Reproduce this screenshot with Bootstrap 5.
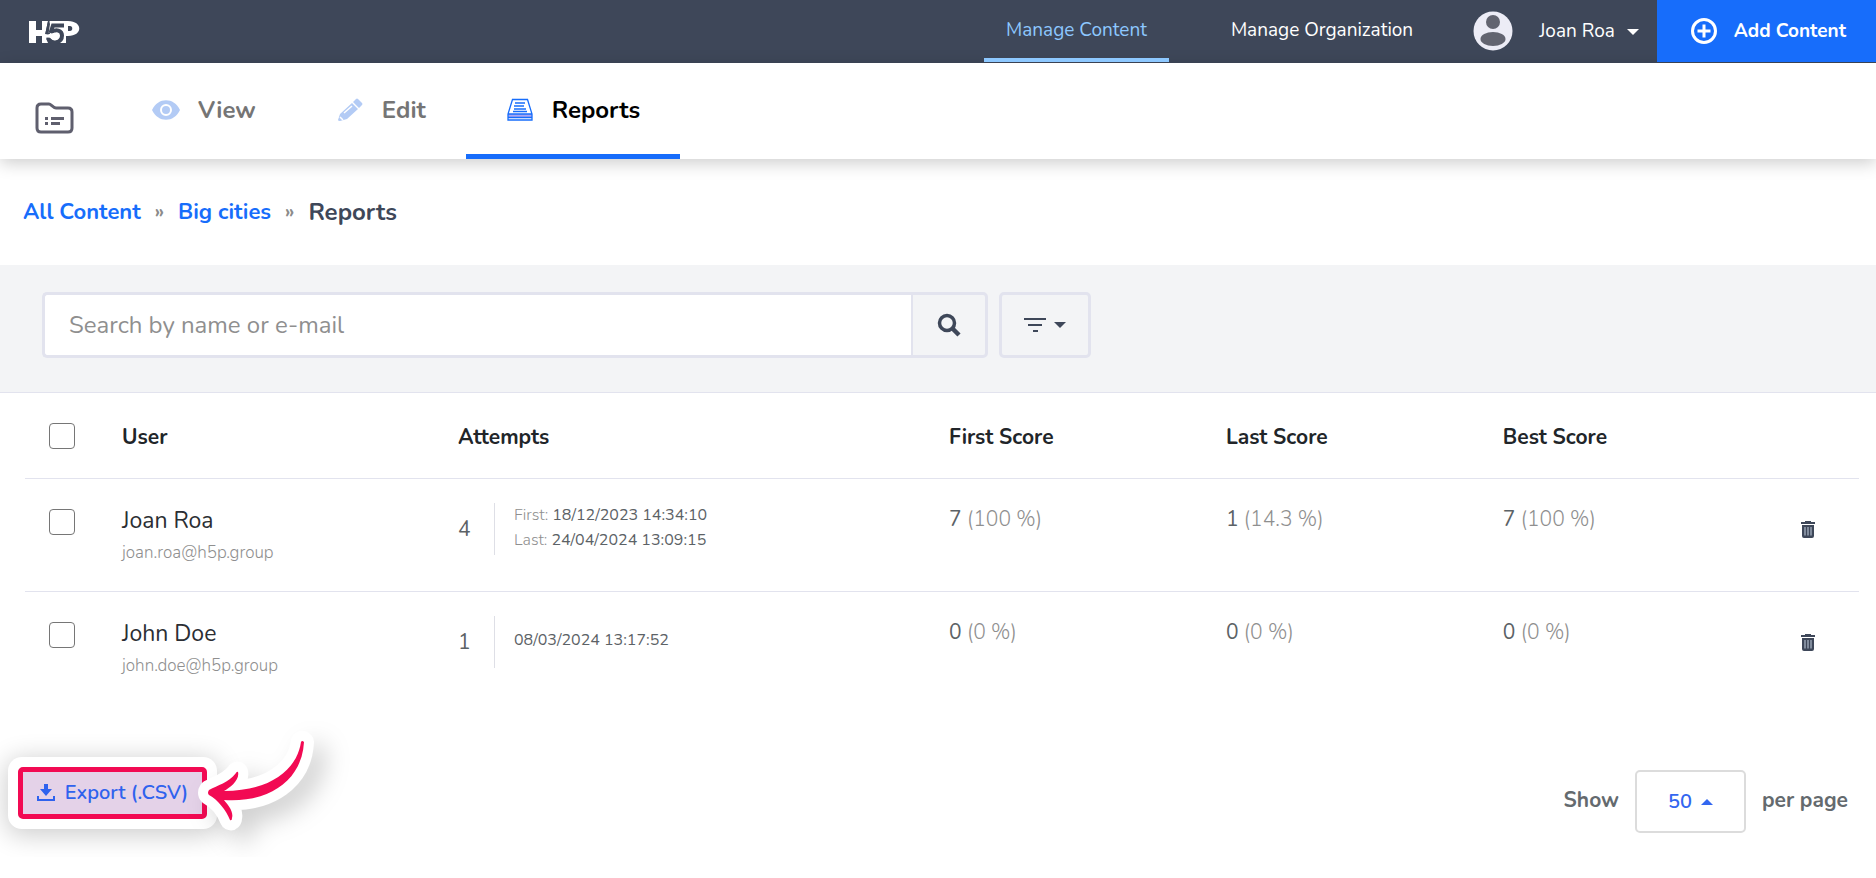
<!DOCTYPE html>
<html lang="en">
<head>
<meta charset="utf-8">
<meta name="viewport" content="width=device-width, initial-scale=1">
<title>Reports – Big cities</title>
<link rel="stylesheet" href="https://cdn.jsdelivr.net/npm/bootstrap@5.3.0/dist/css/bootstrap.min.css">
<script src="https://cdn.jsdelivr.net/npm/bootstrap@5.3.0/dist/js/bootstrap.bundle.min.js"></script>
<style>
body{font-family:Nunito,Lato,"Open Sans",sans-serif;font-size:21px;line-height:24px;color:#202124;background:#fff}
a{text-decoration:none}
svg{display:block;flex:none}
.topbar{background:#3e4759;min-height:63px;font-size:19px}
.brandmark{padding:20px 0 0 28px}
.topnav{gap:40px}
.navtab{height:62px;padding:2px 22px 0;color:#fff;border-bottom:4px solid transparent}
.navtab.active{color:#8dc8ff;border-color:#8dc8ff}
.usermenu{background:none;border:0;color:#fff;padding:0 18px 0 38px;height:62px}
.usermenu svg{margin-right:26px}
.usermenu .tri{margin:2px 0 0 12px}
.addbtn{background:#176dfb;color:#fff;border:0;height:62px;font-weight:700;padding:0 30px 0 33px;gap:16px}
.tri{border:6px solid transparent;border-bottom-width:0;border-top-color:currentColor}
.tri-up{border:6px solid transparent;border-top-width:0;border-bottom-color:currentColor}
.subbar{min-height:96px;box-shadow:0 4px 16px rgba(0,0,0,.2)}
.foldlink{padding:38px 37px 0 35px}
.tool{height:96px;padding:2px 40px 0;gap:18px;font-size:24px;font-weight:700;color:#757575;border-bottom:5px solid transparent}
.tool.active{color:#000;border-color:#176dfb}
.crumbs{padding:0 23px;height:106px;font-size:22px;font-weight:700;gap:14px}
.crumbs a{color:#176dfb}
.crumbs span{color:#8b8b8b;font-size:19px}
.crumbs strong{color:#3e4759;font-size:24px;font-weight:700}
.filterbar{background:#f3f4f6;border-bottom:1px solid #e2e3ee;padding:27px 42px 34px;gap:11px}
.searchbox{width:946px}
.searchbox .form-control,.boxbtn{height:66px;border:3px solid #e2e3ee;border-radius:5px;font-size:24px}
.searchbox .form-control{padding:0 24px;border-right:0}
.searchbox .form-control::placeholder{color:#8f8f8f}
.boxbtn{background:#f3f4f6;color:#3e4759;gap:8px}
.searchbox .findbtn{width:78px}
.filterbtn{width:92px}
.results{padding:0 17px 0 25px}
.report{table-layout:fixed}
.report>:not(caption)>*>*{padding:24px 0;border-bottom:1px solid #e2e3ee;vertical-align:top}
.report tbody tr:last-child td{border-bottom:0}
.report .c-check{width:97px}.report .c-user{width:336px}.report .c-tries{width:491px}.report .c-score{width:15.1%}
.report th{font-weight:700;height:85px}
.report th span{display:block;padding-top:8px}
.report td{height:113px;color:#8f8f8f}
.report .form-check-input{width:26px;height:26px;margin:6px 0 0 24px;border:1px solid #767676;border-radius:4px;display:block}
.report b{font-weight:400;color:#5c6266}
.scoreline{font-size:21px;line-height:32px;font-weight:300}
.person{font-size:23px;color:#2b2e33;line-height:36px;font-weight:400}
.mailline{font-size:17px;line-height:28px;font-weight:300}
.tries{width:37px;height:52px;border-right:1px solid #dedfe6;color:#5c6266;line-height:52px}
.dates{font-size:16px;line-height:25px;padding:0 0 2px 19px;font-weight:300}
.delbtn{background:none;border:0;color:#3e4759;padding:18px 0 0;margin-left:20px}
.bottombar{padding:63px 28px 24px 18px}
.exportwrap{position:relative}
.exportbtn{height:52px;width:189px;border:5px solid #f20a53;border-radius:5px;background:#e4d2e8;color:#2f62ee;font-size:20px;font-weight:600;gap:10px;padding:0;box-shadow:0 0 0 10px #fff,0 4px 26px 12px rgba(0,0,0,.2)}
.pointer{position:absolute;left:172px;top:-57px;pointer-events:none;overflow:visible;filter:drop-shadow(12px 12px 12px rgba(0,0,0,.18))}
.perpage{color:#646a6e;font-weight:700;gap:16px;margin-top:3px}
.perpage label{padding-bottom:4px}
.pagebtn{width:111px;height:63px;border:2px solid #dcdcdc;border-radius:5px;background:#fff;color:#3367f0;font-size:20px;font-weight:600;gap:9px}
</style>
</head>
<body>
<header class="topbar d-flex align-items-start">
  <a href="#" class="brandmark" aria-label="H5P"><svg width="53" height="24" viewBox="0 0 53 24"><path fill="#fff" d="M1 1h7v9h6V1h6l-3 14 3 8h-6v-7H8v7H1zM21 1h19c15 0 15 15 0 15h-2v7h-9l-9-6 2-13z"/><path fill="#3e4759" d="M40 6h2c3 0 3 5 0 5h-2z"/><path fill="none" stroke="#3e4759" stroke-width="4" d="M36 5.500H25L22.500 13M23 12.500c5-4 11-2 11 3 0 7-10 10-14 3"/><path fill="none" stroke="#3e4759" stroke-width="1.500" d="M21 0l-3 14 4-1"/><path fill="#fff" d="m17 14 6 1c2-4 7-2 7 1s-5 4-7 1l-6 1z"/></svg></a>
  <nav class="topnav ms-auto d-flex">
    <a class="navtab active d-flex align-items-center" href="#">Manage Content</a>
    <a class="navtab d-flex align-items-center" href="#">Manage Organization</a>
  </nav>
  <button class="usermenu d-flex align-items-center" type="button"><svg width="40" height="40" viewBox="0 0 40 40"><circle cx="20" cy="20" r="19.500" fill="#ececf6"/><circle cx="20" cy="11" r="7" fill="#626470"/><ellipse cx="20" cy="28" rx="12.500" ry="7" fill="#626470"/></svg>Joan Roa<span class="tri"></span></button>
  <button class="addbtn d-flex align-items-center" type="button"><svg width="28" height="28" viewBox="0 0 28 28" fill="none" stroke="#fff" stroke-width="3"><circle cx="14" cy="14" r="11.500"/><path d="M14 7.500v13M7.500 14h13"/></svg>Add Content</button>
</header>
<div class="subbar d-flex">
  <a href="#" class="foldlink" aria-label="Content folder"><svg width="40" height="34" viewBox="0 0 40 34"><path d="M6 3h8c2 0 4 4 7 4h12q4 0 4 4v16q0 4-4 4H6q-4 0-4-4V7q0-4 4-4z" fill="none" stroke="#5f5f6e" stroke-width="3"/><path d="M10 16h3v3h-3zM16 16h13v3H16zM10 21h3v3h-3zM16 21h9v3h-9z" fill="#5f5f6e"/></svg></a>
  <nav class="d-flex">
    <a class="tool d-flex align-items-center" href="#"><svg width="28" height="22" viewBox="0 0 28 22"><path d="M0 11C6-2 22-2 28 11 22 24 6 24 0 11z" fill="#b3cbf5"/><circle cx="14" cy="11" r="5" fill="#b3cbf5" stroke="#fff" stroke-width="2"/></svg>View</a>
    <a class="tool d-flex align-items-center" href="#"><svg width="28" height="26" viewBox="0 0 28 26"><path d="M4 17 16 6l6 6L11 22l-7 2q-2 0-2-1zM17 5l3-3q1-1 2 0l4 4q1 1 0 2l-3 3z" fill="#b3cbf5"/><path d="m8 16 8-7M4 20l3 3" stroke="#fff" stroke-width="1.500"/></svg>Edit</a>
    <a class="tool active d-flex align-items-center" href="#"><svg width="28" height="24" viewBox="0 0 28 24"><path d="M2 16h24v3H2z" fill="#a9a6f0"/><path d="M6.500 1.500h15L26 16v6H2v-6zM2 16h24M2 19.500h24M9 5h10M8 8h10M8 11h12M7 13.500h14" fill="none" stroke="#176dfb" stroke-width="1.300"/></svg>Reports</a>
  </nav>
</div>
<nav class="crumbs d-flex align-items-center" aria-label="Breadcrumb"><a href="#">All Content</a><span>»</span><a href="#">Big cities</a><span>»</span><strong>Reports</strong></nav>
<form class="filterbar d-flex">
  <div class="input-group flex-nowrap searchbox"><input class="form-control" type="text" aria-label="Search by name or e-mail" placeholder="Search by name or e-mail"><button class="boxbtn findbtn d-flex align-items-center justify-content-center" type="button" aria-label="Search"><svg width="24" height="24" viewBox="0 0 24 24" fill="none" stroke="#3e4759"><circle cx="10" cy="10" r="7.500" stroke-width="3.500"/><path d="m15.500 15.500 6.500 6.500" stroke-width="4.500"/></svg></button></div>
  <button class="boxbtn filterbtn d-flex align-items-center justify-content-center" type="button" aria-label="Filter"><svg width="22" height="16" viewBox="0 0 22 16" fill="#3e4759"><path d="M0 1h22v2H0zM4 7h14v2H4zM9 13h5v2H9z"/></svg><span class="tri"></span></button>
</form>
<main>
  <div class="results">
    <table class="table report mb-0">
      <thead><tr>
        <th class="c-check"><input class="form-check-input" type="checkbox" aria-label="Select all"></th>
        <th class="c-user"><span>User</span></th><th class="c-tries"><span>Attempts</span></th><th class="c-score"><span>First Score</span></th><th class="c-score"><span>Last Score</span></th><th class="c-score"><span>Best Score</span></th><th></th>
      </tr></thead>
      <tbody>
        <tr>
          <td><input class="form-check-input" type="checkbox" aria-label="Select Joan Roa"></td>
          <td><div class="person">Joan Roa</div><div class="mailline">joan.roa@h5p.group</div></td>
          <td><div class="d-flex align-items-center"><div class="tries">4</div><div class="dates">First: <b>18/12/2023 14:34:10</b><br>Last: <b>24/04/2024 13:09:15</b></div></div></td>
          <td class="scoreline"><b>7</b> (100 %)</td><td class="scoreline"><b>1</b> (14.3 %)</td><td class="scoreline"><b>7</b> (100 %)</td>
          <td><button class="delbtn" type="button" aria-label="Delete Joan Roa"><svg width="16" height="18" viewBox="0 0 16 18" fill="#3e4759"><path d="M5 0h6v1h4v2H1V1h4zM2 4h12v11q0 2-2 2H4q-2 0-2-2z"/><path d="M5 6v8.500M8 6v8.500M11 6v8.500" stroke="#c3d0e0" stroke-width="1"/></svg></button></td>
        </tr>
        <tr>
          <td><input class="form-check-input" type="checkbox" aria-label="Select John Doe"></td>
          <td><div class="person">John Doe</div><div class="mailline">john.doe@h5p.group</div></td>
          <td><div class="d-flex align-items-center"><div class="tries">1</div><div class="dates"><b>08/03/2024 13:17:52</b></div></div></td>
          <td class="scoreline"><b>0</b> (0 %)</td><td class="scoreline"><b>0</b> (0 %)</td><td class="scoreline"><b>0</b> (0 %)</td>
          <td><button class="delbtn" type="button" aria-label="Delete John Doe"><svg width="16" height="18" viewBox="0 0 16 18" fill="#3e4759"><path d="M5 0h6v1h4v2H1V1h4zM2 4h12v11q0 2-2 2H4q-2 0-2-2z"/><path d="M5 6v8.500M8 6v8.500M11 6v8.500" stroke="#c3d0e0" stroke-width="1"/></svg></button></td>
        </tr>
      </tbody>
    </table>
  </div>
  <div class="bottombar d-flex justify-content-between align-items-start">
    <div class="exportwrap">
      <button class="exportbtn d-flex align-items-center justify-content-center" type="button"><svg width="18" height="18" viewBox="0 0 18 18" fill="#2f62ee"><path d="M7 0h4v5h4l-6 7-6-7h4zM0 12h2v3h14v-3h2v5H0z"/></svg>Export (.CSV)</button>
      <svg class="pointer" width="140" height="120" viewBox="190 -10 140 120"><path d="M301 22C297 50 270 71 224 71 230 68 240 60 238 52q-1-1-2 1C228 63 218 65 209 70q-2 3 0 5C218 80 226 90 230 100q2 1 2-2C234 91 227 84 224 80 270 83 302 60 304 22q-2-2-3 0z" fill="#f20a53" stroke="#fff" stroke-width="20" stroke-linejoin="round" paint-order="stroke"/></svg>
    </div>
    <div class="perpage d-flex align-items-center"><label for="pagesize">Show</label><button id="pagesize" class="pagebtn d-flex align-items-center justify-content-center" type="button">50<span class="tri-up"></span></button><label for="pagesize">per page</label></div>
  </div>
</main>
</body>
</html>
